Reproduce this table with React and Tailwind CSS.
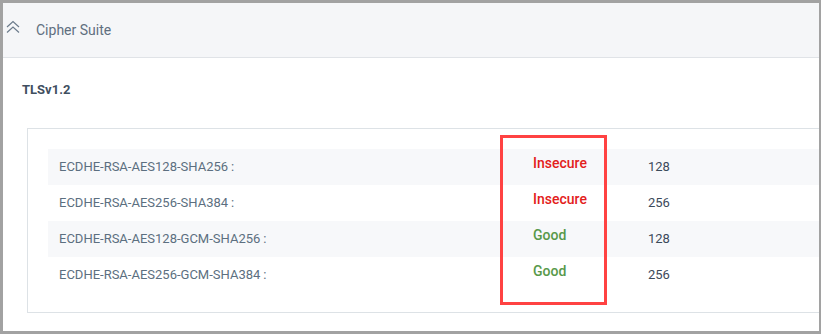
import React from 'react';

const ciphers = [
  { name: 'ECDHE-RSA-AES128-SHA256', status: 'Insecure', bits: 128 },
  { name: 'ECDHE-RSA-AES256-SHA384', status: 'Insecure', bits: 256 },
  { name: 'ECDHE-RSA-AES128-GCM-SHA256', status: 'Good', bits: 128 },
  { name: 'ECDHE-RSA-AES256-GCM-SHA384', status: 'Good', bits: 256 },
];

const CollapseIcon = () => (
  <svg width="16" height="14" viewBox="0 0 16 14" fill="none" stroke="#6b7b8b" strokeWidth="1.2">
    <path d="M2 7 L8 1.5 L14 7" />
    <path d="M2 12.5 L8 7 L14 12.5" />
  </svg>
);

const CipherRow = ({ name, status, bits, shaded }) => (
  <div className={`flex items-center h-[36px] ${shaded ? 'bg-[#f7f8fa]' : ''}`}>
    <div className="w-[485px] pl-[11px] text-[13px] text-[#5c6f80]">
      {name}
      <span className="ml-[3px]">:</span>
    </div>
    <div
      className={`w-[115px] -mt-[8px] text-[14px] font-medium ${
        status === 'Good' ? 'text-[#58994a]' : 'text-[#e3201b]'
      }`}
    >
      {status}
    </div>
    <div className="text-[13px] text-[#3b4a5a]">{bits}</div>
  </div>
);

export default function App() {
  return (
    <div
      className="relative w-[821px] h-[334px] bg-[#a2a2a2] pt-[3px] pl-[3px] pr-[2px] pb-[3px]"
      style={{ fontFamily: 'Roboto, "Liberation Sans", sans-serif' }}
    >
      <div className="h-full bg-white overflow-hidden flex flex-col">
        <div className="h-[55px] shrink-0 bg-[#f5f6f8] border-b border-[#e0e3e7] flex items-center">
          <div className="ml-[2px] -mt-[6px]">
            <CollapseIcon />
          </div>
          <span className="ml-[15px] text-[14px] text-[#5f6f7f]">Cipher Suite</span>
        </div>

        <div className="pl-[19px] pt-[24px] text-[13px] leading-[16px] font-bold text-[#3f4f5f]">
          TLSv1.2
        </div>

        <div className="mt-[30px] ml-[24px] w-[820px] shrink-0 border border-[#dde2e6] pt-[20px] pb-[19px] pl-[20px]">
          {ciphers.map((c, i) => (
            <CipherRow key={c.name} {...c} shaded={i % 2 === 0} />
          ))}
        </div>
      </div>

      <div className="absolute left-[500px] top-[135px] w-[107px] h-[170px] border-[3px] border-[#ff4242]" />
    </div>
  );
}
